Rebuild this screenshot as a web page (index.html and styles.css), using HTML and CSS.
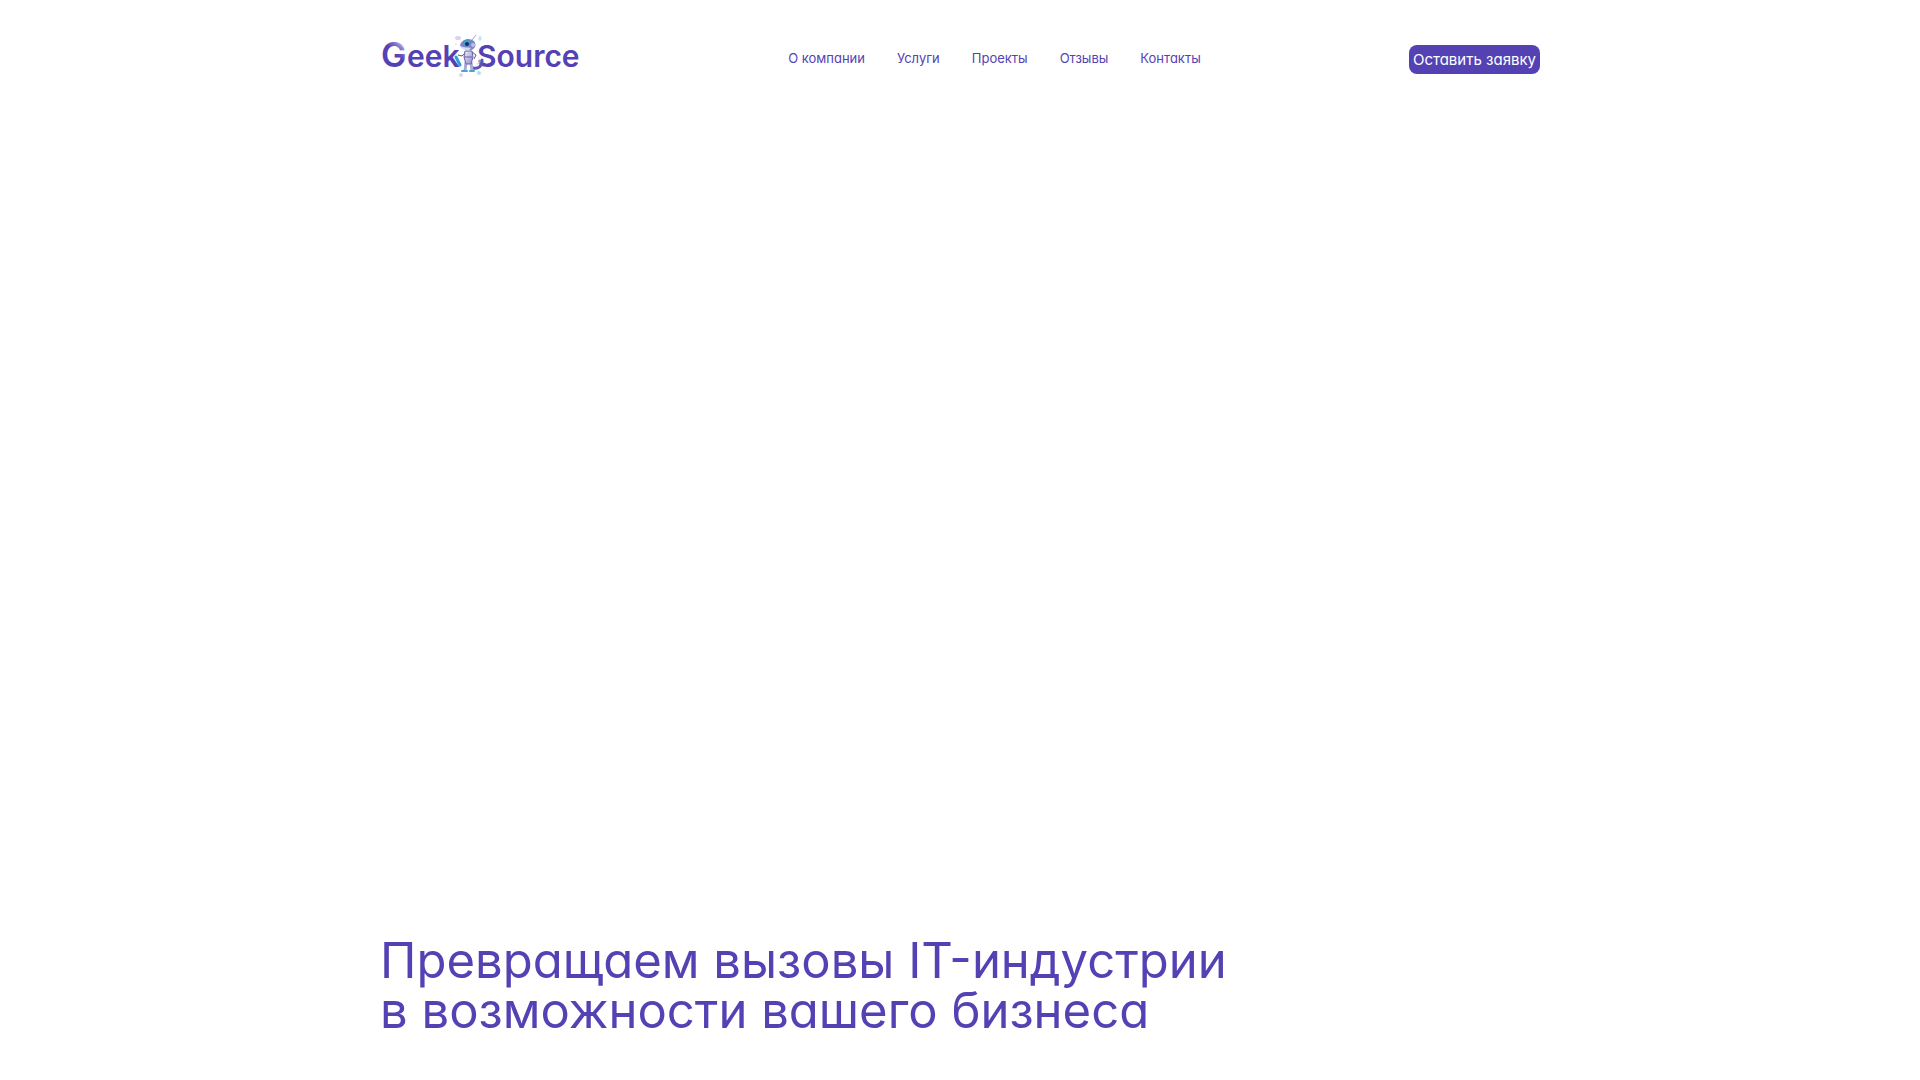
FILE: index.html
```html
<!DOCTYPE html>
<html lang="ru">
<head>
  <meta charset="UTF-8">
  <meta name="viewport" content="width=device-width, initial-scale=1.0">
  <title>GeekSource</title>
  <link rel="stylesheet" href="styles.css">
</head>
<body>

<div class="container">
  <header class="header">
    <a class="logo" href="#" aria-label="GeekSource">
      <svg width="200" height="48" viewBox="0 0 200 48">
        <defs>
          <linearGradient id="g-fade" x1="0.2" y1="1" x2="0.8" y2="0">
            <stop offset="0.55" stop-color="#5442b4"/>
            <stop offset="0.72" stop-color="#8173c9"/>
            <stop offset="0.9" stop-color="#dcd7f0"/>
          </linearGradient>
          <linearGradient id="body-fill" x1="0" y1="0" x2="1" y2="1">
            <stop offset="0" stop-color="#eef0fb"/>
            <stop offset="1" stop-color="#8e86cf"/>
          </linearGradient>
        </defs>
        <text class="logo-g" x="1" y="35" fill="url(#g-fade)">G</text>
        <text class="logo-text" x="27" y="35">eek</text>
        <text class="logo-text" x="97" y="35">Source</text>

        <!-- bubbles -->
        <ellipse cx="78" cy="6" rx="3" ry="2" fill="#d9d2f3"/>
        <path d="M100 3l2 4-2 2-2-2z" fill="#b9e9f3"/>
        <circle cx="81" cy="43" r="2" fill="#dcd6f4"/>
        <circle cx="99" cy="41" r="2" fill="#a3e5ef"/>
        <circle cx="76" cy="12" r="1" fill="#e7e2f8"/>

        <!-- chameleon robot -->
        <path d="M93 36c6 1 9-2 9-8" fill="none" stroke="#5d55b5" stroke-width="3" stroke-linecap="round"/>
        <path d="M97 32c3 0 4-3 2-5" fill="none" stroke="#a9d9f3" stroke-width="1" stroke-linecap="round"/>
        <path d="M76 25l4 8" stroke="#329bd8" stroke-width="3" stroke-linecap="round"/>
        <path d="M78 23l4 1 4-4M92 20l4 3-2 4" fill="none" stroke="#5c5690" stroke-width="1"/>
        <path d="M86 30l-1 9M91 30l1 9" stroke="#a9a8dd" stroke-width="3"/>
        <path d="M82 39h5M90 39h4" stroke="#4aa3d0" stroke-width="2" stroke-linecap="round"/>
        <path d="M85 19h7l1 6-2 7h-5l-2-7z" fill="url(#body-fill)" stroke="#6963a1" stroke-width="1"/>
        <path d="M84 25h8" stroke="#665fa5" stroke-width="1"/>
        <path d="M80 13c2-6 9-8 14-4 3 4 1 8-3 9-5 0-10-1-11-5z" fill="#7f83c9"/>
        <path d="M80 14c4 2 8 1 11 2l-2 2c-4 0-8-1-9-4z" fill="#d5dcf6"/>
        <ellipse cx="87" cy="11" rx="4" ry="3" fill="#3fa0c8"/>
        <circle cx="87" cy="12" r="2" fill="#1d2f55"/>
        <path d="M92 8l4-5" stroke="#aaa1dc" stroke-width="1"/>
        <circle cx="93" cy="13" r="2" fill="#c4bce6"/>
      </svg>
    </a>

    <nav class="nav">
      <a href="#about">О компании</a>
      <a href="#services">Услуги</a>
      <a href="#projects">Проекты</a>
      <a href="#reviews">Отзывы</a>
      <a href="#contacts">Контакты</a>
    </nav>

    <button class="btn" type="button">Оставить заявку</button>
  </header>

  <main class="hero">
    <h1>Превращаем вызовы IT-индустрии<br>в возможности вашего бизнеса</h1>
  </main>
</div>

</body>
</html>
```

FILE: styles.css
```css
* {
  box-sizing: border-box;
}

body {
  margin: 0;
  background-color: #fff;
  color: #5442b4;
  font-family: Inter, "Liberation Sans", sans-serif;
  font-feature-settings: "cv11";
}

.container {
  max-width: 1160px;
  min-height: 100vh;
  margin: 0 auto;
  display: flex;
  flex-direction: column;
}

.header {
  display: flex;
  justify-content: space-between;
  align-items: flex-end;
  padding: 32px 0;
}

.logo svg {
  display: block;
}

.logo-g {
  font-size: 34px;
  font-weight: 600;
}

.logo-text {
  font-size: 30px;
  font-weight: 600;
  fill: #5442b4;
}

.nav {
  display: flex;
  gap: 32px;
  padding-bottom: 12px;
}

.nav a {
  color: #5442b4;
  font-size: 13px;
  line-height: 20px;
  text-decoration: none;
}

.btn {
  height: 29px;
  margin-bottom: 6px;
  padding: 0 4px;
  border: none;
  border-radius: 8px;
  background-color: #5442b4;
  color: #fff;
  font: inherit;
  font-size: 15px;
  cursor: pointer;
}

.hero {
  margin-top: auto;
  padding-bottom: 44px;
}

h1 {
  margin: 0;
  font-size: 49px;
  font-weight: 400;
  line-height: 50px;
}
```
